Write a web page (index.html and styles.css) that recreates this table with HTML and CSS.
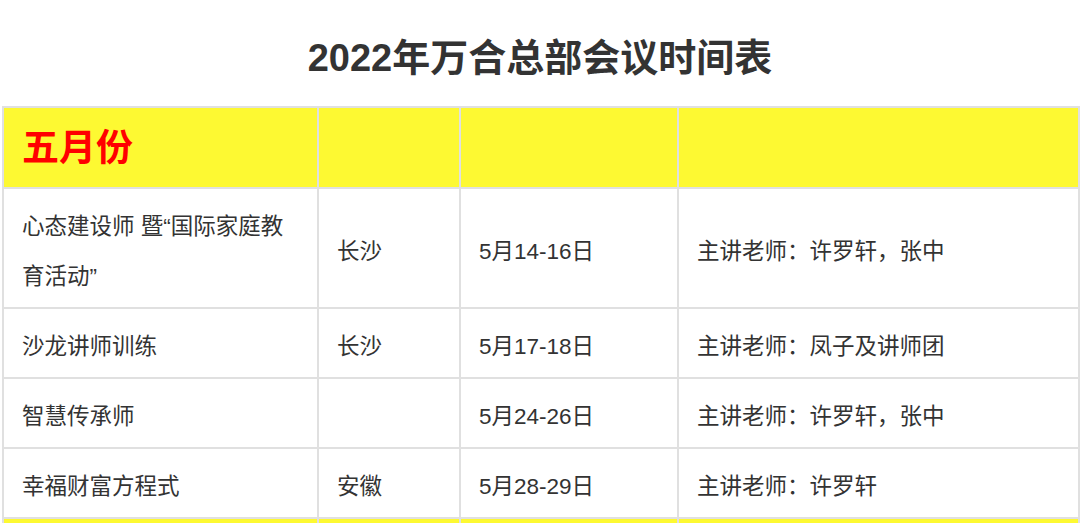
FILE: index.html
```html
<!DOCTYPE html>
<html lang="zh">
<head>
<meta charset="utf-8">
<title>2022年万合总部会议时间表</title>
<link rel="stylesheet" href="styles.css">
</head>
<body>
<div class="page">
  <h1 class="title">2022年万合总部会议时间表</h1>
  <table class="schedule">
    <colgroup>
      <col class="c1"><col class="c2"><col class="c3"><col class="c4">
    </colgroup>
    <tbody>
      <tr class="month"><td class="month-name">五月份</td><td></td><td></td><td></td></tr>
      <tr><td>心态建设师 暨“国际家庭教育活动”</td><td>长沙</td><td>5月14-16日</td><td>主讲老师：许罗轩，张中</td></tr>
      <tr><td>沙龙讲师训练</td><td>长沙</td><td>5月17-18日</td><td>主讲老师：凤子及讲师团</td></tr>
      <tr><td>智慧传承师</td><td></td><td>5月24-26日</td><td>主讲老师：许罗轩，张中</td></tr>
      <tr><td>幸福财富方程式</td><td>安徽</td><td>5月28-29日</td><td>主讲老师：许罗轩</td></tr>
      <tr class="month"><td class="month-name"></td><td></td><td></td><td></td></tr>
    </tbody>
  </table>
</div>
</body>
</html>
```

FILE: styles.css
```css
html, body {
  margin: 0;
  padding: 0;
  background: #ffffff;
}
.page {
  padding: 0 2px;
  font-family: "Liberation Sans", "Noto Sans CJK SC", sans-serif;
  color: #333333;
}
.title {
  margin: 0;
  padding-top: 36px;
  height: 70px;
  line-height: 44px;
  font-size: 38px;
  font-weight: 700;
  text-align: center;
  color: #333333;
}
.schedule {
  width: 1076px;
  border-collapse: collapse;
  table-layout: fixed;
}
.c1 { width: 315px; }
.c2 { width: 142px; }
.c3 { width: 218px; }
.c4 { width: 401px; }
.schedule td {
  border: 2px solid #e0e0e0;
  padding: 13px 18px 5px 18px;
  font-size: 22.5px;
  line-height: 50px;
  vertical-align: middle;
  color: #333333;
}
.schedule .month td {
  background: #fdf932;
  height: 59px;
  padding-top: 11px;
  padding-bottom: 9px;
}
.schedule .month-name {
  font-size: 37px;
  font-weight: 700;
  color: #ff0000;
  line-height: 50px;
}
```
